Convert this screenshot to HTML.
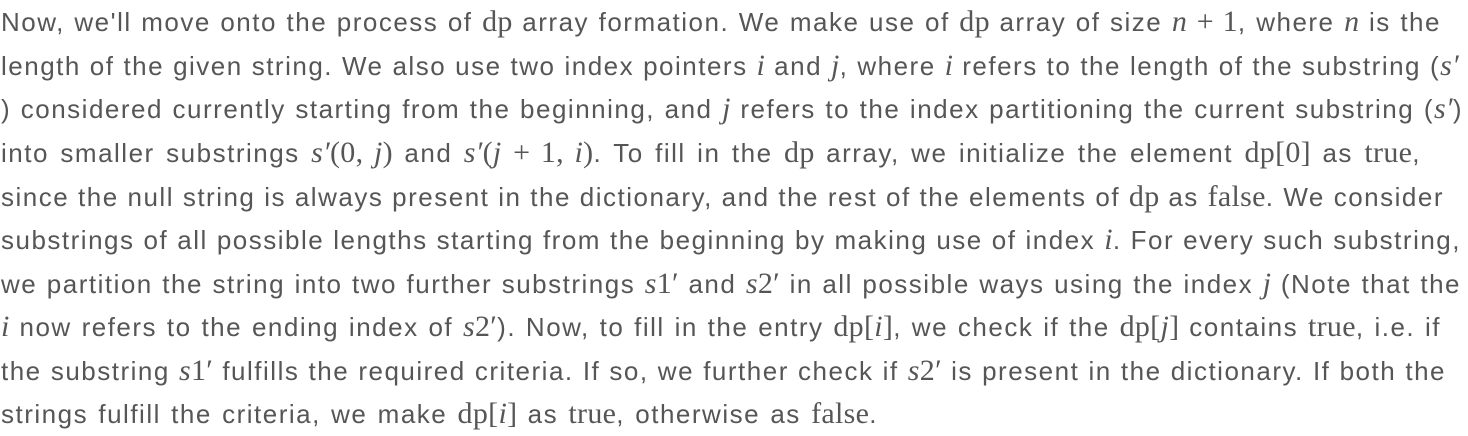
<!DOCTYPE html>
<html><head><meta charset="utf-8"><style>
html,body{margin:0;padding:0;background:#fff;width:1468px;height:436px;overflow:hidden}
.t{position:absolute;left:1px;font-family:"Liberation Sans",sans-serif;font-size:26px;letter-spacing:1.5px;color:#565656;white-space:nowrap;line-height:44px;text-align:justify;text-align-last:justify}
.m{font-family:"Liberation Serif",serif;font-size:30px;letter-spacing:0.3px}
.i{font-family:"Liberation Serif",serif;font-style:italic;font-size:30px;letter-spacing:0.3px}
</style></head><body>
<div class="t" style="top:0;width:1440px">Now, we'll move onto the process of <span class="m">dp</span> array formation. We make use of <span class="m">dp</span> array of size <span class="i">n</span> <span class="m">+ 1</span>, where <span class="i">n</span> is the</div>
<div class="t" style="top:44px;width:1458px">length of the given string. We also use two index pointers <span class="i">i</span> and <span class="i">j</span>, where <span class="i">i</span> refers to the length of the substring (<span class="i">s′</span></div>
<div class="t" style="top:87px;width:1462px">) considered currently starting from the beginning, and <span class="i">j</span> refers to the index partitioning the current substring (<span class="i">s′</span>)</div>
<div class="t" style="top:131px;width:1420px">into smaller substrings <span class="i">s′</span><span class="m">(0, </span><span class="i">j</span><span class="m">)</span> and <span class="i">s′</span><span class="m">(</span><span class="i">j</span> <span class="m">+ 1, </span><span class="i">i</span><span class="m">)</span>. To fill in the <span class="m">dp</span> array, we initialize the element <span class="m">dp[0]</span> as <span class="m">true</span>,</div>
<div class="t" style="top:175px;width:1443px">since the null string is always present in the dictionary, and the rest of the elements of <span class="m">dp</span> as <span class="m">false</span>. We consider</div>
<div class="t" style="top:218px;width:1460px">substrings of all possible lengths starting from the beginning by making use of index <span class="i">i</span>. For every such substring,</div>
<div class="t" style="top:262px;width:1460px">we partition the string into two further substrings <span class="i">s</span><span class="m">1′</span> and <span class="i">s</span><span class="m">2′</span> in all possible ways using the index <span class="i">j</span> (Note that the</div>
<div class="t" style="top:305px;width:1440px"><span class="i">i</span> now refers to the ending index of <span class="i">s</span><span class="m">2′</span>). Now, to fill in the entry <span class="m">dp[</span><span class="i">i</span><span class="m">]</span>, we check if the <span class="m">dp[</span><span class="i">j</span><span class="m">]</span> contains <span class="m">true</span>, i.e. if</div>
<div class="t" style="top:349px;width:1445px">the substring <span class="i">s</span><span class="m">1′</span> fulfills the required criteria. If so, we further check if <span class="i">s</span><span class="m">2′</span> is present in the dictionary. If both the</div>
<div class="t" style="top:392px;width:877px">strings fulfill the criteria, we make <span class="m">dp[</span><span class="i">i</span><span class="m">]</span> as <span class="m">true</span>, otherwise as <span class="m">false</span>.</div>
</body></html>
